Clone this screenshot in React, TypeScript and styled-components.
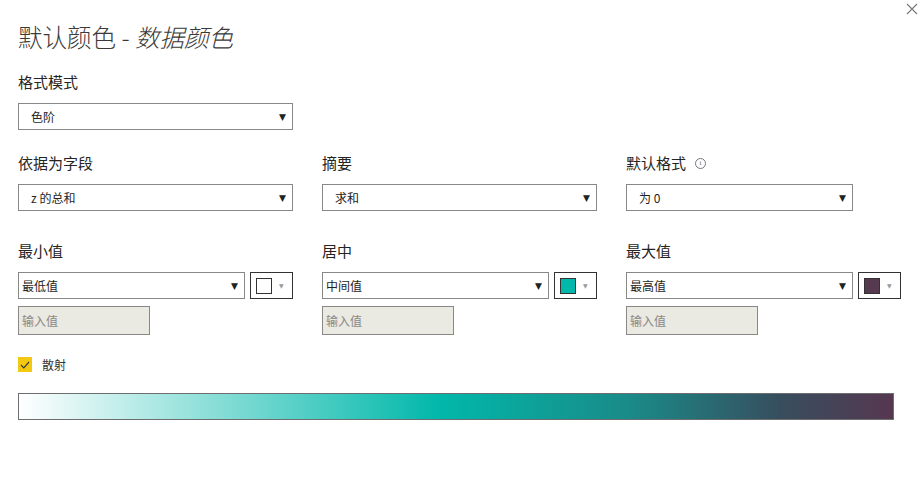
import React from 'react'
import styled, { createGlobalStyle } from 'styled-components'

const GlobalStyle = createGlobalStyle`
  html, body {
    margin: 0;
    padding: 0;
    background: #ffffff;
  }
  body {
    font-family: "Noto Sans CJK SC", "Noto Sans", "Liberation Sans", sans-serif;
    color: #252423;
  }
`

export default function App() {
  return (
    <>
      <GlobalStyle />
      <Dialog>
        <CloseButton aria-label="close">
          <svg width="12" height="12" viewBox="0 0 12 12">
            <path d="M1 1 L11 11 M11 1 L1 11" stroke="#777" strokeWidth="1.1" />
          </svg>
        </CloseButton>
        <Title>
          默认颜色 - <em>数据颜色</em>
        </Title>

        <Section>
          <Label>格式模式</Label>
          <Select $width={275} $pad={12}>
            <span>色阶</span>
            <Arrow>▼</Arrow>
          </Select>
        </Section>

        <Columns $top={22}>
          <Column>
            <Label>依据为字段</Label>
            <Select $width={275} $pad={12}>
              <span>z 的总和</span>
              <Arrow>▼</Arrow>
            </Select>
          </Column>
          <Column>
            <Label>摘要</Label>
            <Select $width={275} $pad={12}>
              <span>求和</span>
              <Arrow>▼</Arrow>
            </Select>
          </Column>
          <Column>
            <Label>
              默认格式
              <Info>i</Info>
            </Label>
            <Select $width={227} $pad={12}>
              <span>为 0</span>
              <Arrow>▼</Arrow>
            </Select>
          </Column>
        </Columns>

        <Columns $top={29}>
          {[
            { label: '最小值', value: '最低值', color: '#ffffff' },
            { label: '居中', value: '中间值', color: '#01b8aa' },
            { label: '最大值', value: '最高值', color: '#553a50' },
          ].map((c) => (
            <Column key={c.label}>
              <Label>{c.label}</Label>
              <SelectRow>
                <Select $width={227} $pad={3}>
                  <span>{c.value}</span>
                  <Arrow>▼</Arrow>
                </Select>
                <ColorButton>
                  <Swatch $color={c.color} />
                  <SmallArrow>▼</SmallArrow>
                </ColorButton>
              </SelectRow>
              <ValueInput placeholder="输入值" disabled />
            </Column>
          ))}
        </Columns>

        <CheckRow>
          <CheckBox>
            <svg width="10" height="8" viewBox="0 0 10 8">
              <path d="M1 4 L3.8 6.8 L9 1" fill="none" stroke="#3a3a3a" strokeWidth="1.2" />
            </svg>
          </CheckBox>
          <CheckLabel>散射</CheckLabel>
        </CheckRow>

        <GradientBar />
      </Dialog>
    </>
  )
}

const Dialog = styled.div`
  position: relative;
  width: 924px;
  height: 486px;
  box-sizing: border-box;
  padding: 20px 18px 0 18px;
`

const CloseButton = styled.div`
  position: absolute;
  top: 3px;
  right: 6px;
  width: 12px;
  height: 12px;
  display: flex;
`

const Title = styled.h1`
  margin: 0;
  font-size: 24.5px;
  font-weight: 300;
  line-height: 34px;
  color: #3b3a39;
  em {
    font-style: italic;
  }
`

const Section = styled.div`
  margin-top: 17px;
  display: flex;
  flex-direction: column;
`

const Columns = styled.div<{ $top: number }>`
  margin-top: ${(p) => p.$top}px;
  display: grid;
  grid-template-columns: 304px 304px 280px;
`

const Column = styled.div`
  display: flex;
  flex-direction: column;
`

const Label = styled.div`
  font-size: 15px;
  line-height: 22px;
  color: #252423;
  display: flex;
  align-items: center;
  margin-bottom: 10px;
`

const Info = styled.span`
  margin-left: 9px;
  width: 9px;
  height: 9px;
  border: 1px solid #777;
  border-radius: 50%;
  font-size: 7px;
  line-height: 9px;
  text-align: center;
  color: #666;
  font-family: "Liberation Serif", serif;
`

const Select = styled.div<{ $width: number; $pad: number }>`
  width: ${(p) => p.$width}px;
  height: 27px;
  box-sizing: border-box;
  border: 1px solid #8a8886;
  display: flex;
  align-items: center;
  justify-content: space-between;
  padding: 0 6px 0 ${(p) => p.$pad}px;
  font-size: 12px;
  color: #252423;
  background: #fff;
`

const Arrow = styled.span`
  font-size: 9px;
  color: #222;
  font-family: "DejaVu Sans", sans-serif;
`

const SelectRow = styled.div`
  display: flex;
  gap: 5px;
`

const ColorButton = styled.div`
  width: 43px;
  height: 27px;
  box-sizing: border-box;
  border: 1px solid #333;
  display: flex;
  align-items: center;
  padding-left: 5px;
  gap: 7px;
`

const Swatch = styled.div<{ $color: string }>`
  width: 16px;
  height: 16px;
  box-sizing: border-box;
  border: 1px solid #333;
  background: ${(p) => p.$color};
`

const SmallArrow = styled.span`
  font-size: 6px;
  color: #999;
  font-family: "DejaVu Sans", sans-serif;
`

const ValueInput = styled.input`
  margin-top: 7px;
  width: 132px;
  height: 29px;
  box-sizing: border-box;
  border: 1px solid #8a8886;
  background: #eae9e2;
  padding: 0 3px;
  font-family: "Noto Sans CJK SC", sans-serif;
  font-size: 12px;
  &::placeholder {
    color: #888;
  }
`

const CheckRow = styled.div`
  margin-top: 21px;
  display: flex;
  align-items: center;
  gap: 10px;
`

const CheckBox = styled.div`
  width: 14px;
  height: 15px;
  background: #f2c811;
  display: flex;
  align-items: center;
  justify-content: center;
`

const CheckLabel = styled.span`
  font-size: 12px;
  color: #333;
`

const GradientBar = styled.div`
  margin-top: 20px;
  width: 876px;
  height: 27px;
  box-sizing: border-box;
  border: 1px solid #6e6e70;
  background: linear-gradient(to right, #ffffff 0%, #01b8aa 48%, #1a8a88 70%, #374e5e 87%, #563750 100%);
`
